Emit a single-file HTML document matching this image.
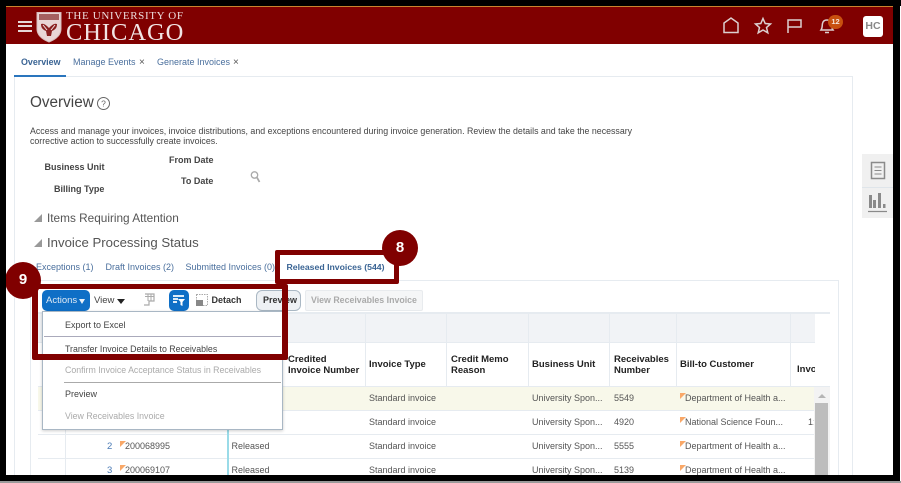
<!DOCTYPE html>
<html><head><meta charset="utf-8"><style>
html,body{margin:0;padding:0;background:#fff}
#p{position:relative;width:901px;height:483px;overflow:hidden;background:#fff;font-family:"Liberation Sans",sans-serif;color:#333}
.a{position:absolute;white-space:nowrap}
.b{font-weight:bold}
.l{color:#4a6f9d}
.h{font-size:9.5px;font-weight:bold;color:#222;line-height:11px}
.c{font-size:9px;color:#555}
.f{position:absolute;width:0;height:0;border-top:6px solid #f9a868;border-right:6px solid transparent}
.ln{position:absolute;background:#e6ebf0}
</style></head><body><div id="p">
<!-- header -->
<div class="a" style="left:0;top:7px;width:893px;height:37px;background:#800000"></div>
<div class="a" style="left:6px;top:6px;width:888px;height:1px;background:#c9842e"></div>
<div class="a" style="left:18px;top:21px;width:14px;height:2px;background:#e6d8d8"></div>
<div class="a" style="left:18px;top:25px;width:14px;height:2px;background:#e6d8d8"></div>
<div class="a" style="left:18px;top:30px;width:14px;height:2px;background:#e6d8d8"></div>
<svg class="a" style="left:36px;top:11px" width="26" height="32" viewBox="0 0 26 32"><path d="M1 1.500H25V18C25 25 18 29 13 31C8 29 1 25 1 18Z" fill="#e9d6d6" stroke="#d9bcbc"/><rect x="3" y="3" width="20" height="6" fill="#a56060"/><path d="M5 13C8 12 10 14 13 17C16 14 18 12 21 13C21 18 18 19 16 20L15 25H11L10 20C8 19 5 18 5 13Z" fill="#8a2020"/><path d="M7 14L11 19M19 14L15 19" stroke="#f1e6e6"/></svg>
<div class="a" style="left:66px;top:10px;font:11px 'Liberation Serif',serif;letter-spacing:.65px;color:#ecdcdc">THE UNIVERSITY OF</div>
<div class="a" style="left:66px;top:18.500px;font:24.5px/27px 'Liberation Serif',serif;letter-spacing:.95px;color:#f1e4e4">CHICAGO</div>
<svg class="a" style="left:720px;top:14px" width="180" height="22" viewBox="0 0 180 22" fill="none" stroke="#dcd0d0" stroke-width="1.5">
<path d="M4 18.500V9L11 4L18 9V18.500Z"/>
<path d="M43 4.500L45.200 9.500L50.500 10L46.500 13.500L47.800 18.800L43 16L38.200 18.800L39.500 13.500L35.500 10L40.800 9.500Z"/>
<path d="M68 19V6H81V13H68"/>
<path d="M101 16C102.500 14 102 12 102.500 9.500C103 7 105 6 107 6C109 6 111 7 111.500 9.500C112 12 111.500 14 113 16ZM105 18.500H109"/>
</svg>
<div class="a" style="left:828px;top:15px;width:15px;height:14px;border-radius:7px;background:#c8500f;color:#f6e3d8;font:bold 7.5px/14px 'Liberation Sans',sans-serif;text-align:center">12</div>
<div class="a" style="left:863px;top:15.500px;width:20px;height:21px;border-radius:3px;background:#fff;color:#888;font:bold 10.5px/21px 'Liberation Sans',sans-serif;text-align:center">HC</div>
<!-- tabs -->
<div class="a b" style="left:21px;top:57px;font-size:8.9px;color:#3a6494">Overview</div>
<div class="a l" style="left:73px;top:57px;font-size:9px">Manage Events</div>
<div class="a" style="left:139px;top:57px;font-size:10px;color:#555">×</div>
<div class="a l" style="left:157px;top:57px;font-size:9px">Generate Invoices</div>
<div class="a" style="left:233px;top:57px;font-size:10px;color:#555">×</div>
<div class="a" style="left:14px;top:75px;width:52px;height:2px;background:#2a75bd"></div>
<div class="ln" style="left:66px;top:76px;width:787px;height:1px"></div>
<div class="ln" style="left:14px;top:77px;width:1px;height:398px"></div>
<div class="ln" style="left:852px;top:76px;width:1px;height:399px"></div>
<div class="a" style="left:30px;top:94px;font-size:15.3px;color:#444">Overview</div>
<svg class="a" style="left:96px;top:96px" width="15" height="15" viewBox="0 0 15 15"><circle cx="7.500" cy="7.500" r="6" fill="none" stroke="#666"/><text x="7.500" y="10.500" font-size="8.500" fill="#666" text-anchor="middle" font-family="Liberation Sans">?</text></svg>
<div class="a" style="left:30px;top:126px;font-size:8.82px;line-height:10.300px;color:#444">Access and manage your invoices, invoice distributions, and exceptions encountered during invoice generation. Review the details and take the necessary<br>corrective action to successfully create invoices.</div>
<div class="a b" style="left:44.500px;top:162px;font-size:9px;color:#444">Business Unit</div>
<div class="a b" style="left:54px;top:183.500px;font-size:9px;color:#444">Billing Type</div>
<div class="a b" style="left:169px;top:154.500px;font-size:9px;color:#444">From Date</div>
<div class="a b" style="left:181px;top:175.500px;font-size:9px;color:#444">To Date</div>
<svg class="a" style="left:249px;top:169px" width="14" height="15" viewBox="0 0 14 15" fill="none" stroke="#aaa"><circle cx="5.500" cy="6" r="3.200" stroke-width="1.300"/><path d="M8 8.500L10.500 13" stroke-width="1.800"/></svg>
<div class="a" style="left:34px;top:214px;width:0;height:0;border-bottom:8px solid #999;border-left:8px solid transparent"></div>
<div class="a" style="left:47px;top:211px;font-size:11.8px;color:#555">Items Requiring Attention</div>
<div class="a" style="left:34px;top:239px;width:0;height:0;border-bottom:8px solid #999;border-left:8px solid transparent"></div>
<div class="a" style="left:47px;top:235px;font-size:13.2px;color:#555">Invoice Processing Status</div>
<!-- sub tabs -->
<div class="a l" style="left:36px;top:261.500px;font-size:9px">Exceptions (1)</div>
<div class="a l" style="left:105.500px;top:261.500px;font-size:9px">Draft Invoices (2)</div>
<div class="a l" style="left:185.500px;top:261.500px;font-size:9px">Submitted Invoices (0)</div>
<div class="a b" style="left:286.500px;top:261.500px;font-size:8.7px;color:#3a6494">Released Invoices (544)</div>
<div class="ln" style="left:36px;top:280px;width:802px;height:1px"></div>
<div class="ln" style="left:838px;top:280px;width:1px;height:195px"></div>
<div class="ln" style="left:30px;top:281px;width:1px;height:194px"></div>
<!-- toolbar -->
<div class="a" style="left:42px;top:290px;width:48px;height:21px;border-radius:5px;background:#0f6fc6;color:#dfeaf5;font-size:9.500px;line-height:21px;padding-left:4px;box-sizing:border-box">Actions</div>
<div class="a" style="left:79px;top:299px;width:0;height:0;border-top:5px solid #e8f0f8;border-left:3.500px solid transparent;border-right:3.500px solid transparent"></div>
<div class="a" style="left:94px;top:295px;font-size:9.500px;color:#444">View</div>
<div class="a" style="left:117px;top:299px;width:0;height:0;border-top:5px solid #222;border-left:4px solid transparent;border-right:4px solid transparent"></div>
<svg class="a" style="left:142px;top:293px" width="13" height="14" viewBox="0 0 13 14"><path d="M3 1H12V8H7V12H2" fill="none" stroke="#aaa" stroke-width="1.200"/><path d="M3 3.500H12M6 1V8M9 1V8" stroke="#aaa"/></svg>
<div class="a" style="left:169px;top:290px;width:20px;height:21px;border-radius:5px;background:#0f6fc6"></div>
<svg class="a" style="left:172px;top:294px" width="14" height="13" viewBox="0 0 14 13"><path d="M1 1H12V3H1ZM1 4H6V6H1ZM1 7H5V9H1Z" fill="#dcebf8"/><path d="M6 5H13L10.500 8V12L8.500 11V8Z" fill="#fff"/></svg>
<svg class="a" style="left:196px;top:294px" width="12" height="12" viewBox="0 0 12 12"><rect x=".500" y=".500" width="11" height="11" fill="none" stroke="#aaa" stroke-dasharray="1.500 1"/><rect x="0" y="6" width="7" height="6" fill="#888"/></svg>
<div class="a b" style="left:211.500px;top:294.500px;font-size:9px;color:#333">Detach</div>
<div class="a" style="left:256px;top:290px;width:45px;height:21px;box-sizing:border-box;border:1px solid #aab8c4;border-radius:6px;background:#eef1f4"></div>
<div class="a b" style="left:263px;top:294.500px;font-size:9px;color:#333">Preview</div>
<div class="a b" style="left:305px;top:290px;width:118px;height:21px;box-sizing:border-box;border:1px solid #e8ebee;border-radius:2px;background:#f5f6f7;color:#aaa;font-size:8.8px;line-height:19px;padding-left:5px">View Receivables Invoice</div>
<!-- table -->
<div class="a" style="left:38px;top:313px;width:777px;height:30px;background:#f1f3f6"></div>
<div class="ln" style="left:38px;top:312px;width:792px;height:2px"></div>
<div class="ln" style="left:38px;top:342px;width:777px;height:1px"></div>
<div class="ln" style="left:38px;top:386px;width:792px;height:1px"></div>
<div class="a" style="left:38px;top:387px;width:776px;height:24px;background:#f8f8ea"></div>
<div class="ln" style="left:38px;top:410px;width:776px;height:1px"></div>
<div class="ln" style="left:38px;top:434px;width:776px;height:1px"></div>
<div class="ln" style="left:38px;top:458px;width:776px;height:1px"></div>
<div class="ln" style="left:65px;top:387px;width:1px;height:88px"></div>
<div class="ln" style="left:365px;top:313px;width:1px;height:74px"></div>
<div class="ln" style="left:446px;top:313px;width:1px;height:74px"></div>
<div class="ln" style="left:528px;top:313px;width:1px;height:74px"></div>
<div class="ln" style="left:609px;top:313px;width:1px;height:74px"></div>
<div class="ln" style="left:676px;top:313px;width:1px;height:74px"></div>
<div class="ln" style="left:790px;top:313px;width:1px;height:74px"></div>
<div class="a" style="left:227px;top:400px;width:1.500px;height:75px;background:#9adbe8"></div>
<div class="a h" style="left:288px;top:354px">Credited<br>Invoice Number</div>
<div class="a h" style="left:369px;top:359px">Invoice Type</div>
<div class="a h" style="left:451px;top:354px">Credit Memo<br>Reason</div>
<div class="a h" style="left:532px;top:359px">Business Unit</div>
<div class="a h" style="left:614px;top:354px">Receivables<br>Number</div>
<div class="a h" style="left:680px;top:359px">Bill-to Customer</div>
<div class="a" style="left:790px;top:359px;width:25px;overflow:hidden;font-size:9.5px;font-weight:bold;color:#222;line-height:21px;padding-left:7px;box-sizing:border-box;height:21px">Invoice</div>
<div class="a c" style="left:369px;top:393px">Standard invoice</div>
<div class="a c" style="left:369px;top:417px">Standard invoice</div>
<div class="a c" style="left:369px;top:441px">Standard invoice</div>
<div class="a c" style="left:369px;top:465px">Standard invoice</div>
<div class="a c" style="left:532px;top:393px">University Spon...</div>
<div class="a c" style="left:532px;top:417px">University Spon...</div>
<div class="a c" style="left:532px;top:441px">University Spon...</div>
<div class="a c" style="left:532px;top:465px">University Spon...</div>
<div class="a c" style="left:614px;top:393px">5549</div>
<div class="a c" style="left:614px;top:417px">4920</div>
<div class="a c" style="left:614px;top:441px">5555</div>
<div class="a c" style="left:614px;top:465px">5139</div>
<div class="f" style="left:680px;top:393px"></div><div class="a c" style="left:685px;top:393px">Department of Health a...</div>
<div class="f" style="left:680px;top:417px"></div><div class="a c" style="left:685px;top:417px">National Science Foun...</div>
<div class="f" style="left:680px;top:441px"></div><div class="a c" style="left:685px;top:441px">Department of Health a...</div>
<div class="f" style="left:680px;top:465px"></div><div class="a c" style="left:685px;top:465px">Department of Health a...</div>
<div class="a c" style="left:808px;top:417px;width:6px;overflow:hidden">1:</div>
<div class="a" style="left:107px;top:441px;font-size:9.500px;color:#4a7ab5">2</div>
<div class="a" style="left:107px;top:465px;font-size:9.500px;color:#4a7ab5">3</div>
<div class="f" style="left:120px;top:441px"></div><div class="a c" style="left:125px;top:441px">200068995</div>
<div class="f" style="left:120px;top:465px"></div><div class="a c" style="left:125px;top:465px">200069107</div>
<div class="a c" style="left:231.500px;top:441px">Released</div>
<div class="a c" style="left:231.500px;top:465px">Released</div>
<!-- scrollbar -->
<div class="a" style="left:814px;top:387px;width:16px;height:88px;background:#f3f3f3"></div>
<div class="a" style="left:815px;top:403px;width:13px;height:72px;background:#bdbdbd"></div>
<div class="a" style="left:818px;top:394px;width:0;height:0;border-bottom:4px solid #b5b5b5;border-left:4px solid transparent;border-right:4px solid transparent"></div>
<!-- menu -->
<div class="a" style="left:42px;top:311px;width:241px;height:119px;box-sizing:border-box;background:#fff;border:1px solid #a9b7c4;box-shadow:0 1px 3px rgba(0,0,0,.2)"></div>
<div class="a" style="left:65px;top:319.500px;font-size:9px;color:#444">Export to Excel</div>
<div class="a" style="left:44px;top:336px;width:237px;height:1px;background:#aab"></div>
<div class="a" style="left:65px;top:343.500px;font-size:8.8px;color:#444">Transfer Invoice Details to Receivables</div>
<div class="a" style="left:65px;top:365px;font-size:8.8px;color:#aaa">Confirm Invoice Acceptance Status in Receivables</div>
<div class="a" style="left:64px;top:382px;width:217px;height:1px;background:#aaa"></div>
<div class="a" style="left:65px;top:388.500px;font-size:9px;color:#444">Preview</div>
<div class="a" style="left:65px;top:410.500px;font-size:8.8px;color:#aaa">View Receivables Invoice</div>
<!-- side panel -->
<div class="a" style="left:862px;top:154px;width:31px;height:64px;background:#f0f0f0"></div>
<div class="a" style="left:862px;top:187px;width:31px;height:1px;background:#dfe5ea"></div>
<svg class="a" style="left:862px;top:154px" width="31" height="64" viewBox="0 0 31 64" fill="none" stroke="#8a8a8a"><rect x="9.500" y="8.500" width="13" height="16" stroke-width="1.500"/><path d="M12.500 13H19.500M12.500 16.500H19.500M12.500 20H19.500"/><path d="M6 57.500H25" stroke-width="1.200"/><rect x="7" y="41" width="3" height="13" fill="#8a8a8a" stroke="none"/><rect x="11" y="46" width="3" height="8" fill="#8a8a8a" stroke="none"/><rect x="16" y="39" width="3" height="15" fill="#8a8a8a" stroke="none"/><rect x="21" y="50" width="2.500" height="4" fill="#8a8a8a" stroke="none"/></svg>
<!-- callouts -->
<div class="a" style="left:275px;top:250px;width:124px;height:34px;box-sizing:border-box;border:5px solid #800000;border-radius:2px"></div>
<div class="a" style="left:32px;top:284px;width:256px;height:76px;box-sizing:border-box;border:6px solid #800000;border-top-width:5px;border-radius:2px"></div>
<div class="a b" style="left:382px;top:230px;width:36px;height:36px;border-radius:50%;background:#800000;color:#fff;font-size:15px;line-height:36px;text-align:center">8</div>
<div class="a b" style="left:5px;top:262px;width:36px;height:37px;border-radius:50%;background:#800000;color:#fff;font-size:15px;line-height:36px;text-align:center">9</div>
<!-- frame -->
<div class="a" style="left:0;top:0;width:901px;height:6px;background:#000"></div>
<div class="a" style="left:0;top:0;width:6px;height:481px;background:#000"></div>
<div class="a" style="left:893px;top:0;width:7px;height:481px;background:#000"></div>
<div class="a" style="left:0;top:475px;width:900px;height:5.500px;background:#000"></div>
<div class="a" style="left:0;top:480.500px;width:901px;height:3px;background:#9a9a9a"></div>
</div></body></html>
